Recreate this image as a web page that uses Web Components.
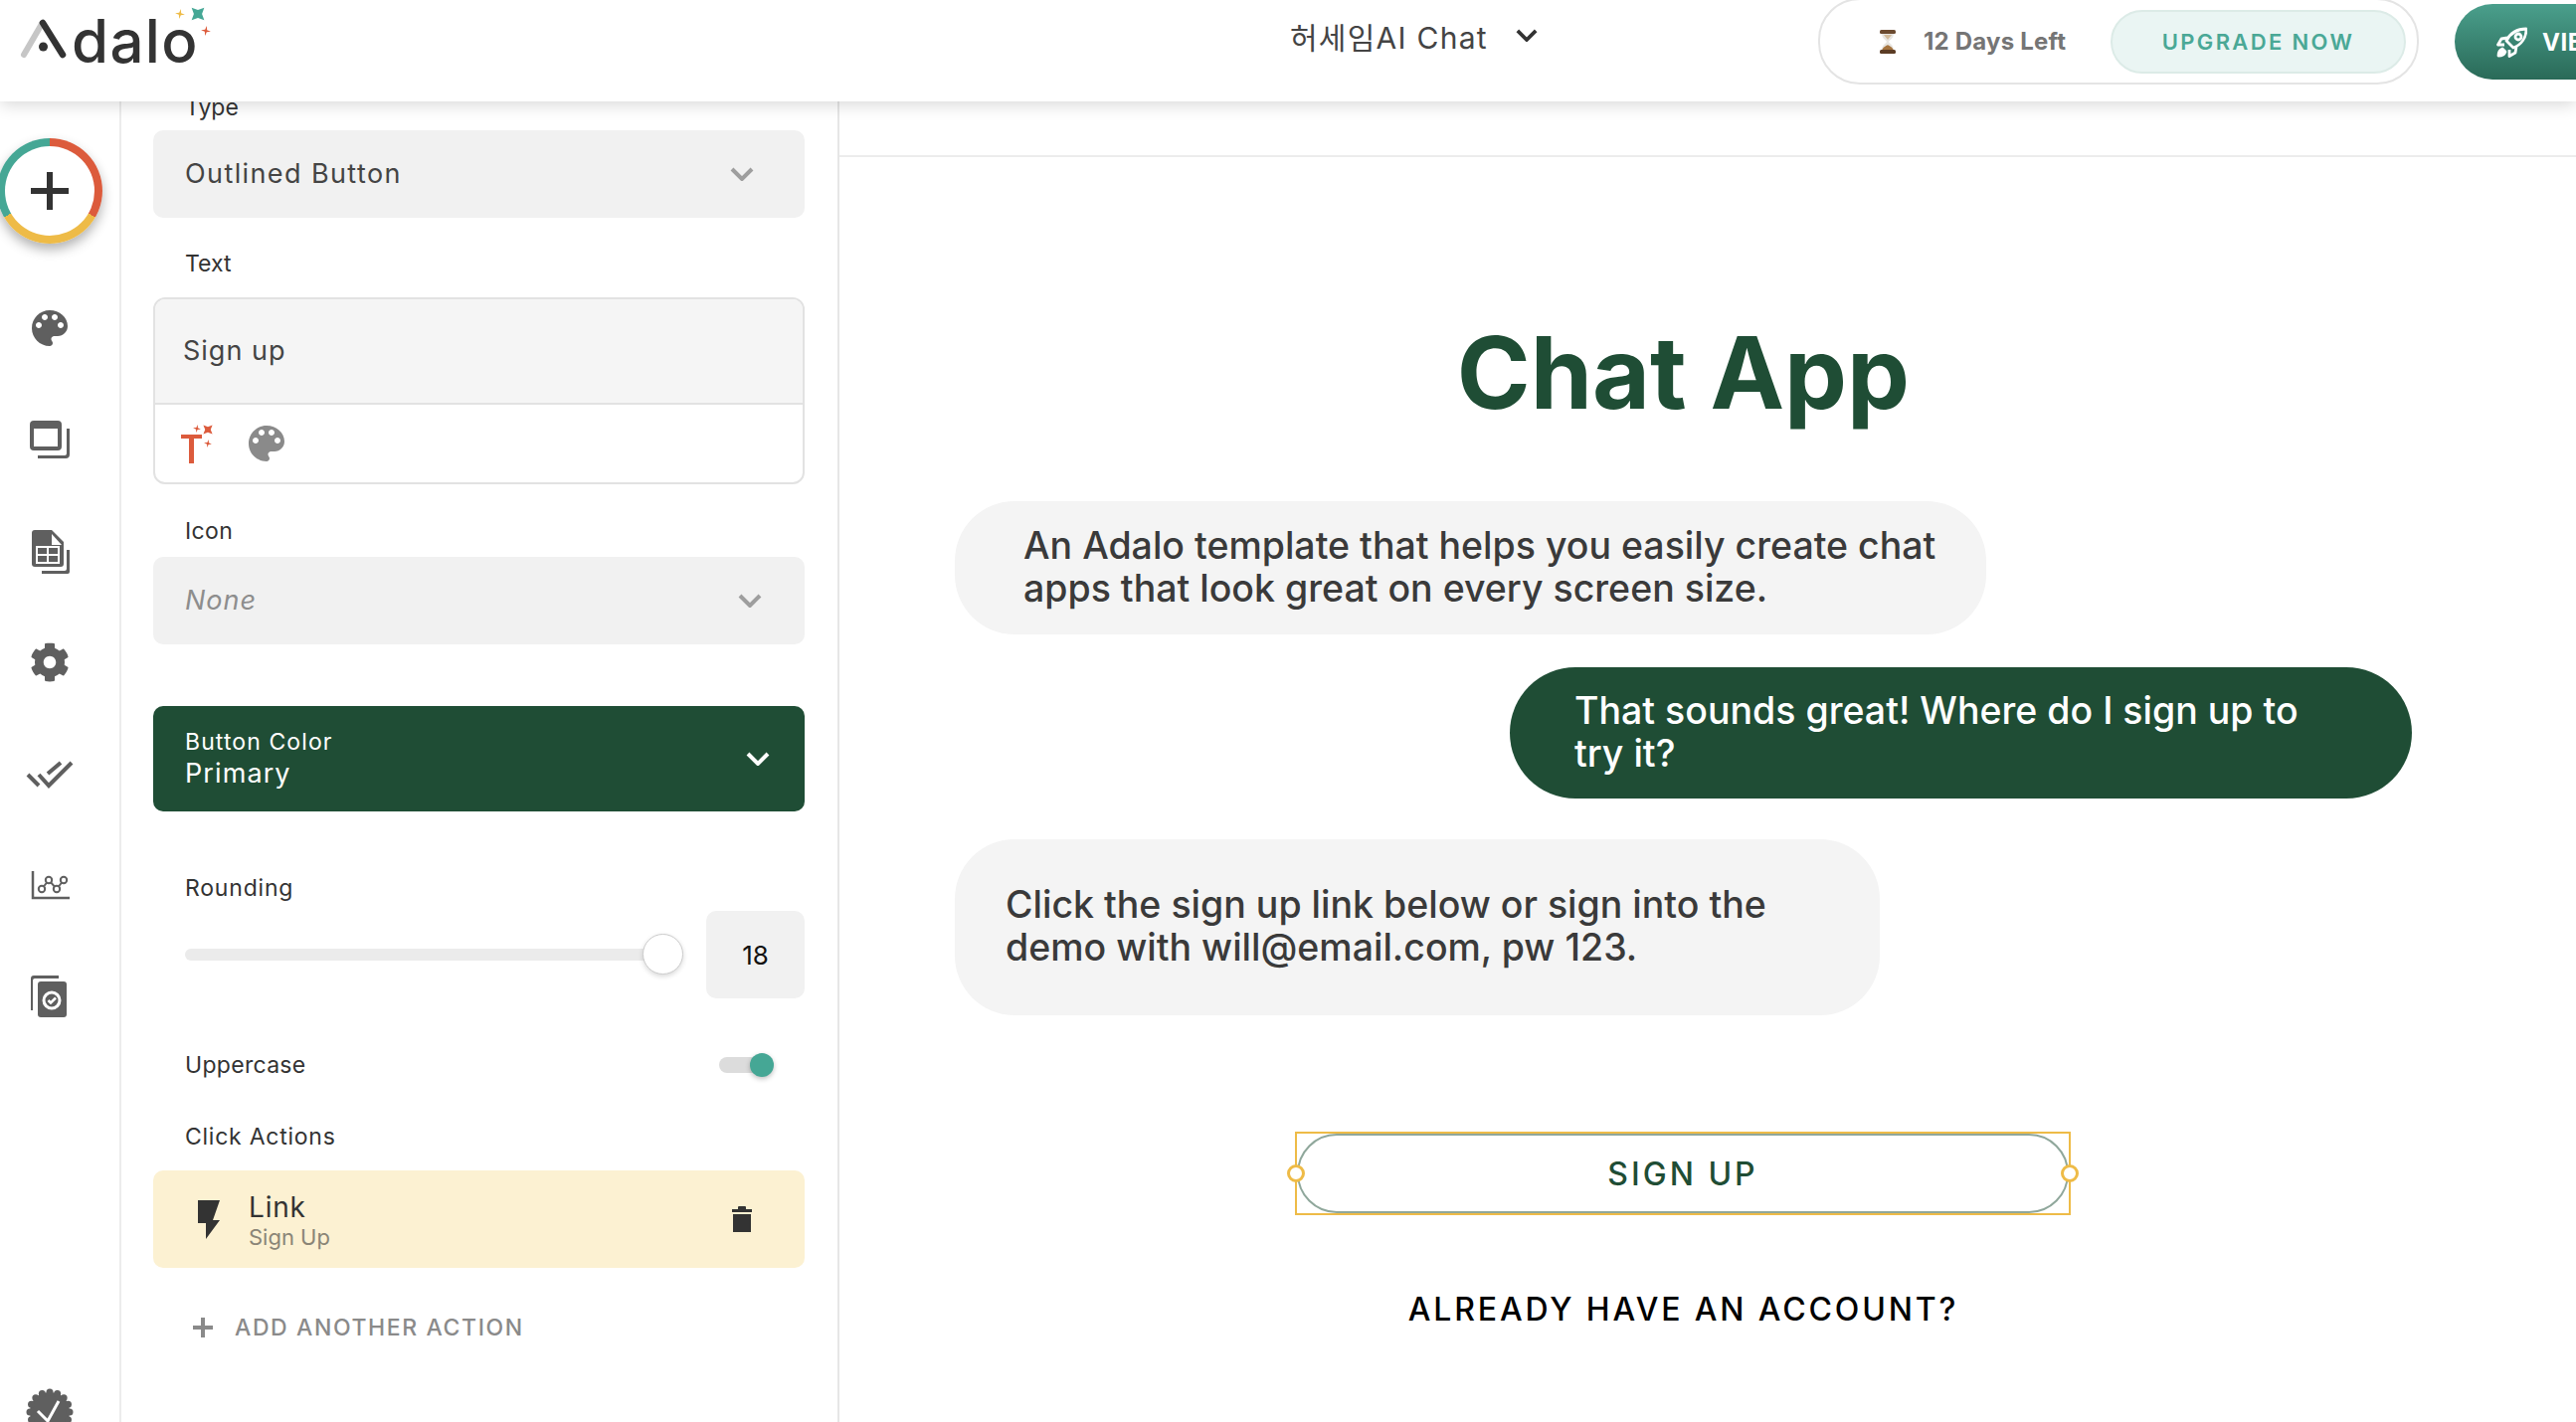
<!DOCTYPE html>
<html lang="en"><head><meta charset="utf-8"><title>Adalo</title>
<style>
html,body{margin:0;padding:0;width:2590px;height:1430px;overflow:hidden;background:#fff}
body{font-family:Inter,"Noto Sans CJK KR",sans-serif;color:#333}
</style></head>
<body>
<adalo-app>
  <top-bar></top-bar>
  <main-area>
    <side-rail></side-rail>
    <prop-panel></prop-panel>
    <canvas-view></canvas-view>
  </main-area>
</adalo-app>
<script>
const def=(name,css,html)=>customElements.define(name,class extends HTMLElement{
  constructor(){super();this.attachShadow({mode:'open'}).innerHTML=`<style>${css}</style>${html}`;}
});
const star=(cx,cy,r,c,rot=0,k=0.18)=>{const q=r*k;return `<path fill="${c}" transform="rotate(${rot} ${cx} ${cy})" d="M${cx} ${cy-r}L${cx+q} ${cy-q}L${cx+r} ${cy}L${cx+q} ${cy+q}L${cx} ${cy+r}L${cx-q} ${cy+q}L${cx-r} ${cy}L${cx-q} ${cy-q}Z"/>`;};
const PALETTE='M12 3c-4.97 0-9 4.03-9 9s4.03 9 9 9c.83 0 1.5-.67 1.5-1.5 0-.39-.15-.74-.39-1.01-.23-.26-.38-.61-.38-.99 0-.83.67-1.5 1.5-1.5H16c2.76 0 5-2.24 5-5 0-4.42-4.03-8-9-8zm-5.5 9c-.83 0-1.5-.67-1.5-1.5S5.67 9 6.5 9 8 9.67 8 10.5 7.33 12 6.5 12zm3-4C8.67 8 8 7.33 8 6.5S8.67 5 9.5 5s1.5.67 1.5 1.5S10.33 8 9.5 8zm5 0c-.83 0-1.5-.67-1.5-1.5S13.67 5 14.5 5s1.5.67 1.5 1.5S15.33 8 14.5 8zm3 4c-.83 0-1.5-.67-1.5-1.5S16.67 9 17.5 9s1.5.67 1.5 1.5-.67 1.5-1.5 1.5z';
const COG='M487.4 315.7l-42.6-24.6c4.3-23.2 4.3-47 0-70.2l42.6-24.6c4.9-2.8 7.1-8.6 5.5-14-11.1-35.6-30-67.8-54.7-94.6-3.8-4.1-10-5.1-14.8-2.3L380.8 110c-17.9-15.4-38.5-27.3-60.8-35.1V25.8c0-5.6-3.9-10.5-9.4-11.7-36.7-8.2-74.3-7.8-109.2 0-5.5 1.2-9.4 6.1-9.4 11.7V75c-22.2 7.9-42.8 19.8-60.8 35.1L88.7 85.5c-4.9-2.8-11-1.9-14.8 2.3-24.7 26.7-43.6 58.9-54.7 94.6-1.7 5.4.6 11.2 5.5 14L67.3 221c-4.3 23.2-4.3 47 0 70.2l-42.6 24.6c-4.9 2.8-7.1 8.6-5.5 14 11.1 35.6 30 67.8 54.7 94.6 3.8 4.1 10 5.1 14.8 2.3l42.6-24.6c17.9 15.4 38.5 27.3 60.8 35.1v49.2c0 5.6 3.9 10.5 9.4 11.7 36.7 8.2 74.3 7.8 109.2 0 5.5-1.2 9.4-6.1 9.4-11.7v-49.2c22.2-7.9 42.8-19.8 60.8-35.1l42.6 24.6c4.9 2.8 11 1.9 14.8-2.3 24.7-26.7 43.6-58.9 54.7-94.6 1.5-5.5-.7-11.3-5.6-14.1zM256 336c-44.1 0-80-35.9-80-80s35.9-80 80-80 80 35.9 80 80-35.9 80-80 80z';
const chev=(c,w=24,h=14,sw=4)=>`<svg width="${w}" height="${h}" viewBox="0 0 24 14" style="display:block;flex:none"><path d="M2 2L12 12L22 2" fill="none" stroke="${c}" stroke-width="${sw}"/></svg>`;

def('adalo-app',`:host{display:flex;flex-direction:column;width:2590px;height:1430px;overflow:hidden}`,`<slot></slot>`);
def('main-area',`:host{display:flex;flex:1;min-height:0}`,`<slot></slot>`);

def('adalo-logo',`:host{display:block;width:230px;height:102px;position:relative;flex:none}
svg{position:absolute;left:0;top:0}
.w{position:absolute;left:72px;top:5px;font:500 60px/72px Inter,sans-serif;color:#333;letter-spacing:1.3px}`,
`<svg width="230" height="102"><line x1="24" y1="55" x2="42" y2="24" stroke="#c6c6c6" stroke-width="6" stroke-linecap="round"/><line x1="43" y1="23" x2="63" y2="55" stroke="#333" stroke-width="6.5" stroke-linecap="round"/><circle cx="43.5" cy="47" r="4.5" fill="#333"/>${star(199,14,9,'#45a795',45,.32)}${star(181,14,5,'#eebb47',10,.2)}${star(207,31,5,'#dc5b3c',10,.2)}</svg><span class="w">dalo</span>`);

def('top-bar',`:host{display:flex;align-items:flex-start;height:102px;flex:none;background:#fff;box-shadow:0 3px 16px rgba(0,0,0,.16);position:relative;z-index:5;clip-path:inset(0 0 -40px 0)}
.title{margin-left:1067px;height:71px;display:flex;align-items:center;gap:28px;font-size:30px;color:#444;white-space:nowrap;flex:none}
.title span{letter-spacing:1.25px}
.days{margin-left:auto;margin-top:-2px;width:604px;height:87px;box-sizing:border-box;border:2px solid #e4e4e4;border-radius:42px;display:flex;align-items:center;padding-left:59px;flex:none}
.days b{margin-left:27px;font-size:24px;font-weight:700;letter-spacing:.2px;color:#757575;white-space:nowrap;width:188px;flex:none}
.up{width:297px;height:64px;margin-top:1px;box-sizing:border-box;border:2px solid #dcebe7;background:#eaf5f3;border-radius:32px;display:flex;align-items:center;justify-content:center;color:#4aa896;font-size:22px;font-weight:600;letter-spacing:2.35px;white-space:nowrap;flex:none}
.view{margin-left:36px;margin-top:4px;width:122px;height:76px;border-radius:38px 0 0 38px;background:linear-gradient(#4a9f8c,#2a6a58);display:flex;align-items:center;padding-left:42px;gap:15px;color:#fff;font-size:24px;font-weight:700;letter-spacing:.5px;flex:none;box-sizing:border-box;white-space:nowrap;overflow:hidden}`,
`<adalo-logo></adalo-logo>
<div class="title"><span>허세임AI Chat</span>${chev('#333',22,13,4)}</div>
<div class="days"><svg width="18" height="26" viewBox="0 0 18 26" style="flex:none"><path d="M3 4C3 10 7 11 8 13C7 15 3 16 3 22H15C15 16 11 15 10 13C11 11 15 10 15 4Z" fill="#e8e6e2"/><path d="M3 22C4 18 8 17 9 16C10 17 14 18 15 22Z" fill="#a5743f"/><path d="M5 6H13C12 8 10 9 9 11C8 9 6 8 5 6Z" fill="#d2bb9b"/><rect x="1" y="1" width="16" height="4" rx="1.5" fill="#6b4a30"/><rect x="1" y="21" width="16" height="4" rx="1.5" fill="#5b3c24"/></svg><b>12 Days Left</b><div class="up">UPGRADE NOW</div></div>
<div class="view"><svg width="31" height="31" viewBox="0 0 31 31" fill="none" stroke="#fff" stroke-width="2.8" stroke-linejoin="round" style="flex:none"><path d="M30 2C21 2 14 6 10 14L17 21C25 18 30 11 30 2Z"/><path d="M11 11L5 12L1.500 18L8 18"/><path d="M20 20L19 26L13 29.500L13 23"/><path d="M6 22C3 23 2 26 2 29C5 29 8 28 9 25Z" fill="#fff"/><circle cx="22" cy="10" r="3"/></svg><span>VIE</span></div>`);

const scallop=Array.from({length:16},(_,i)=>{const a=i*Math.PI/8;return `<circle cx="${(24+20*Math.sin(a)).toFixed(2)}" cy="${(24-20*Math.cos(a)).toFixed(2)}" r="3.500"/>`}).join('');
def('side-rail',`:host{display:flex;flex-direction:column;width:122px;flex:none;box-sizing:border-box;border-right:2px solid #ececec;overflow:hidden;align-items:center;padding-top:37px;position:relative}
.plus{width:106px;height:106px;border-radius:50%;background:conic-gradient(#dc5b3c 0 120deg,#eebb47 120deg 240deg,#45a795 240deg 360deg);box-shadow:0 6px 12px rgba(0,0,0,.3);display:flex;align-items:center;justify-content:center;flex:none;margin-left:-20px;margin-bottom:28px}
.in{width:90px;height:90px;border-radius:50%;background:#fff;display:flex;align-items:center;justify-content:center}
.s{height:112px;display:flex;align-items:center;justify-content:center;flex:none;width:100%;margin-left:-20px;position:relative;top:1px}
svg{display:block;fill:#5f5f5f}`,
`<div class="plus"><div class="in"><svg width="40" height="40" viewBox="0 0 40 40" style="fill:#333"><rect x="17" y="1" width="6" height="38"/><rect x="1" y="17" width="38" height="6"/></svg></div></div>
<div class="s"><svg width="48" height="48" viewBox="0 0 24 24"><path d="${PALETTE}"/></svg></div>
<div class="s"><svg width="48" height="48" viewBox="0 0 48 48"><path fill-rule="evenodd" d="M8 5H32a4 4 0 0 1 4 4V31a4 4 0 0 1-4 4H8a4 4 0 0 1-4-4V9a4 4 0 0 1 4-4ZM8 13V31H32V13Z"/><path d="M41 13H44V39a4 4 0 0 1-4 4H12V40H39a2 2 0 0 0 2-2Z"/></svg></div>
<div class="s"><svg width="48" height="48" viewBox="0 0 48 48"><path d="M9 3H26L38 15V37a3 3 0 0 1-3 3H9a3 3 0 0 1-3-3V6a3 3 0 0 1 3-3Z"/><path style="fill:#fff" d="M26 7L36 18H26Z"/><rect x="10" y="19" width="24" height="18" style="fill:#fff"/><rect x="12" y="21" width="9" height="6"/><rect x="23" y="21" width="9" height="6"/><rect x="12" y="29" width="9" height="6"/><rect x="23" y="29" width="9" height="6"/><path d="M41 23H44V45a2 2 0 0 1-2 2H16V44H39a2 2 0 0 0 2-2Z"/></svg></div>
<div class="s"><svg width="40" height="40" viewBox="0 0 512 512"><path d="${COG}"/></svg></div>
<div class="s"><svg width="48" height="48" viewBox="0 0 48 48" style="fill:none;stroke:#5f5f5f;stroke-width:4"><path d="M2 25L13 36M13 25L23 36L46 13M22 24L35 13"/></svg></div>
<div class="s"><svg width="48" height="48" viewBox="0 0 48 48" style="fill:none;stroke:#5f5f5f"><path stroke-width="2.500" d="M7 10V37H44"/><path stroke-width="2" d="M16 28L23 19L31 28L38 19"/><g stroke-width="2" style="fill:#fff"><circle cx="16" cy="28" r="3.200"/><circle cx="23" cy="19" r="3.200"/><circle cx="31" cy="28" r="3.200"/><circle cx="38" cy="19" r="3.200"/></g></svg></div>
<div class="s"><svg width="48" height="48" viewBox="0 0 48 48"><path d="M8 3H33V6H9a2 2 0 0 0-2 2V38H5V6a3 3 0 0 1 3-3Z"/><rect x="12" y="9" width="29" height="36" rx="3"/><circle cx="26" cy="28" r="8" style="fill:none;stroke:#fff;stroke-width:3"/><path d="M22.500 28L25 30.500L30 25.500" style="fill:none;stroke:#fff;stroke-width:2.500"/></svg></div>
<div class="s" style="margin-top:338px;height:48px"><svg width="48" height="48" viewBox="0 0 48 48"><circle cx="24" cy="24" r="20"/>${scallop}<path d="M12 23L22 33L33 13" style="fill:none;stroke:#fff;stroke-width:3"/></svg></div>`);

def('prop-label',`:host{display:block;height:28px;line-height:28px;font-size:23px;letter-spacing:var(--ls,0);color:#333;padding-left:32px;white-space:nowrap}`,`<slot></slot>`);
def('prop-select',`:host{display:flex;align-items:center;justify-content:space-between;height:88px;box-sizing:border-box;background:#f1f1f1;border-radius:10px;padding:0 var(--pr,51px) 0 32px;font-size:27px;letter-spacing:var(--ts,1.4px);color:#444;white-space:nowrap}
.x{margin-top:-2px}`,`<span class="x"><slot></slot></span>${chev('#9e9e9e')}`);
def('text-box',`:host{display:block;height:188px;box-sizing:border-box;border:2px solid #e2e2e2;border-radius:12px;overflow:hidden}
.t{height:106px;background:#f5f5f5;border-bottom:2px solid #e2e2e2;display:flex;align-items:center;padding:0 0 2px 28px;box-sizing:border-box;font-size:27px;letter-spacing:1px;color:#444}
.b{display:flex;align-items:center;height:78px;padding-left:26px;gap:29px}`,
`<div class="t"><slot></slot></div><div class="b"><svg width="36" height="40" viewBox="0 0 36 40" style="flex:none"><rect x="0" y="11" width="21" height="4" fill="#dc5b3c"/><rect x="8" y="11" width="5" height="29" fill="#dc5b3c"/>${star(27,6,6.500,'#dc5b3c',45,.3)}${star(16,5,4,'#dc5b3c',10,.2)}${star(27,20,4,'#dc5b3c',10,.2)}</svg><svg width="48" height="48" viewBox="0 0 24 24" style="flex:none;margin-left:-3px" fill="#8a8a8a"><path d="${PALETTE}"/></svg></div>`);
def('color-select',`:host{display:flex;align-items:center;justify-content:space-between;height:106px;box-sizing:border-box;background:#1f4d35;border-radius:10px;padding:0 35px 0 32px;color:#fff}
.a{font-size:23px;line-height:30px;letter-spacing:1.1px;white-space:nowrap}.b{font-size:27px;line-height:34px;letter-spacing:1.100px;white-space:nowrap}`,
`<div><div class="a">Button Color</div><div class="b"><slot></slot></div></div>${chev('#fff')}`);
def('range-row',`:host{display:flex;align-items:center;height:88px;padding-left:32px}
.track{position:relative;width:493px;height:12px;background:#ebebeb;border-radius:6px;flex:none}
.knob{position:absolute;right:-8px;top:-15px;width:41px;height:41px;box-sizing:border-box;border-radius:50%;background:#fff;border:1px solid #ccc;box-shadow:0 2px 5px rgba(0,0,0,.15)}
.n{margin-left:auto;width:99px;height:88px;background:#f1f1f1;border-radius:10px;display:flex;align-items:center;justify-content:center;font-size:26px;color:#111}`,
`<div class="track"><div class="knob"></div></div><div class="n"><slot></slot></div>`);
def('toggle-row',`:host{display:flex;align-items:center;justify-content:space-between;height:28px;font-size:23px;letter-spacing:.3px;padding:0 32px 0 32px;white-space:nowrap;color:#333}
.t{position:relative;width:54px;height:16px;background:#dcdcdc;border-radius:8px;flex:none}
.k{position:absolute;right:-1px;top:-4px;width:24px;height:24px;border-radius:50%;background:#45a795;box-shadow:0 2px 5px rgba(0,0,0,.25)}`,
`<slot></slot><div class="t"><div class="k"></div></div>`);
def('action-card',`:host{display:flex;align-items:center;height:98px;background:#fcf1d2;border-radius:10px;padding:0 53px 0 45px;box-sizing:border-box}
.x{margin-left:29px;flex:1}.a{font-size:28px;line-height:36px;letter-spacing:.8px;color:#333}.b{font-size:22px;line-height:26px;color:#8a8577;margin-top:-1px}`,
`<svg width="22" height="39" viewBox="0 0 22 39" style="flex:none" fill="#333"><path d="M0 0H22L15 20H22L8 39V23H0Z"/></svg><div class="x"><div class="a"><slot></slot></div><div class="b">Sign Up</div></div><svg width="20" height="26" viewBox="0 0 20 26" style="flex:none" fill="#333"><rect x="1" y="8" width="18" height="18"/><rect x="0" y="3" width="20" height="3"/><rect x="6" y="0" width="8" height="4" rx="1"/></svg>`);
def('add-action',`:host{display:flex;align-items:center;height:28px;padding-left:40px;gap:22px;font-size:23px;font-weight:500;letter-spacing:1.6px;color:#8a8a8a;white-space:nowrap}`,
`<svg width="20" height="20" viewBox="0 0 20 20" fill="#8a8a8a" style="flex:none"><rect x="8" y="0" width="4" height="20"/><rect x="0" y="8" width="20" height="4"/></svg><slot></slot>`);

def('prop-panel',`:host{display:block;width:722px;flex:none;box-sizing:border-box;border-right:2px solid #e6e6e6;padding:0 33px 0 32px;overflow:hidden;font-size:23px}
.in{margin-top:-8px}`,
`<div class="in">
<prop-label>Type</prop-label>
<prop-select style="margin-top:9px;--pr:51px">Outlined Button</prop-select>
<prop-label style="margin-top:32px">Text</prop-label>
<text-box style="margin-top:20px">Sign up</text-box>
<prop-label style="margin-top:33px;--ls:.4px">Icon</prop-label>
<prop-select style="margin-top:12px;--pr:43px;--ts:1px"><i style="color:#8d8d8d">None</i></prop-select>
<color-select style="margin-top:62px">Primary</color-select>
<prop-label style="margin-top:63px;--ls:.8px">Rounding</prop-label>
<range-row style="margin-top:9px">18</range-row>
<toggle-row style="margin-top:53px">Uppercase</toggle-row>
<prop-label style="margin-top:44px;--ls:.75px">Click Actions</prop-label>
<action-card style="margin-top:20px">Link</action-card>
<add-action style="margin-top:46px">ADD ANOTHER ACTION</add-action>
</div>`);

def('chat-bubble',`:host{display:block;box-sizing:border-box;background:var(--bg,#f4f4f4);color:var(--fg,#3a3a3a);font-size:37.500px;font-weight:500;line-height:43px;white-space:nowrap}`,`<slot></slot>`);
def('selected-button',`:host{display:block;position:relative;width:780px;height:84px;box-sizing:border-box;border:2px solid #eebb47;margin-left:342px}
.b{height:100%;box-sizing:border-box;border:2px solid #8fa79b;border-radius:40px;display:flex;align-items:center;justify-content:center;font-size:32px;font-weight:550;letter-spacing:3px;color:#1f4d35}
.h{position:absolute;top:50%;width:18px;height:18px;margin-top:-9px;box-sizing:border-box;border-radius:50%;border:3px solid #eebb47;background:#fff}
.l{left:-10px}.r{right:-10px}`,
`<div class="b"><slot></slot></div><div class="h l"></div><div class="h r"></div>`);
def('canvas-view',`:host{display:block;flex:1;min-width:0;overflow:hidden}
.strip{height:54px;border-bottom:2px solid #ececec}
.f{width:1465px;margin-left:116px}
h1{margin:167px 0 0;text-align:center;font-size:100px;line-height:100px;font-weight:700;color:#1f4d35}
.acc{margin-top:75px;height:40px;line-height:40px;text-align:center;font-size:32px;font-weight:550;letter-spacing:2.850px;color:#000;white-space:nowrap}`,
`<div class="strip"></div>
<div class="f">
<h1>Chat App</h1>
<chat-bubble style="margin-top:79px;width:1037px;height:134px;border-radius:60px;padding:23px 0 0 69px">An Adalo template that helps you easily create chat<br>apps that look great on every screen size.</chat-bubble>
<chat-bubble style="margin-top:33px;margin-left:558px;width:907px;height:132px;border-radius:66px;padding:22px 0 0 65px;--bg:#1f4d35;--fg:#fff">That sounds great! Where do I sign up to<br>try it?</chat-bubble>
<chat-bubble style="margin-top:41px;width:930px;height:177px;border-radius:60px;padding:44px 0 0 51px">Click the sign up link below or sign into the<br>demo with will@email.com, pw 123.</chat-bubble>
<selected-button style="margin-top:117px">SIGN UP</selected-button>
<div class="acc">ALREADY HAVE AN ACCOUNT?</div>
</div>`);
</script>
</body></html>
